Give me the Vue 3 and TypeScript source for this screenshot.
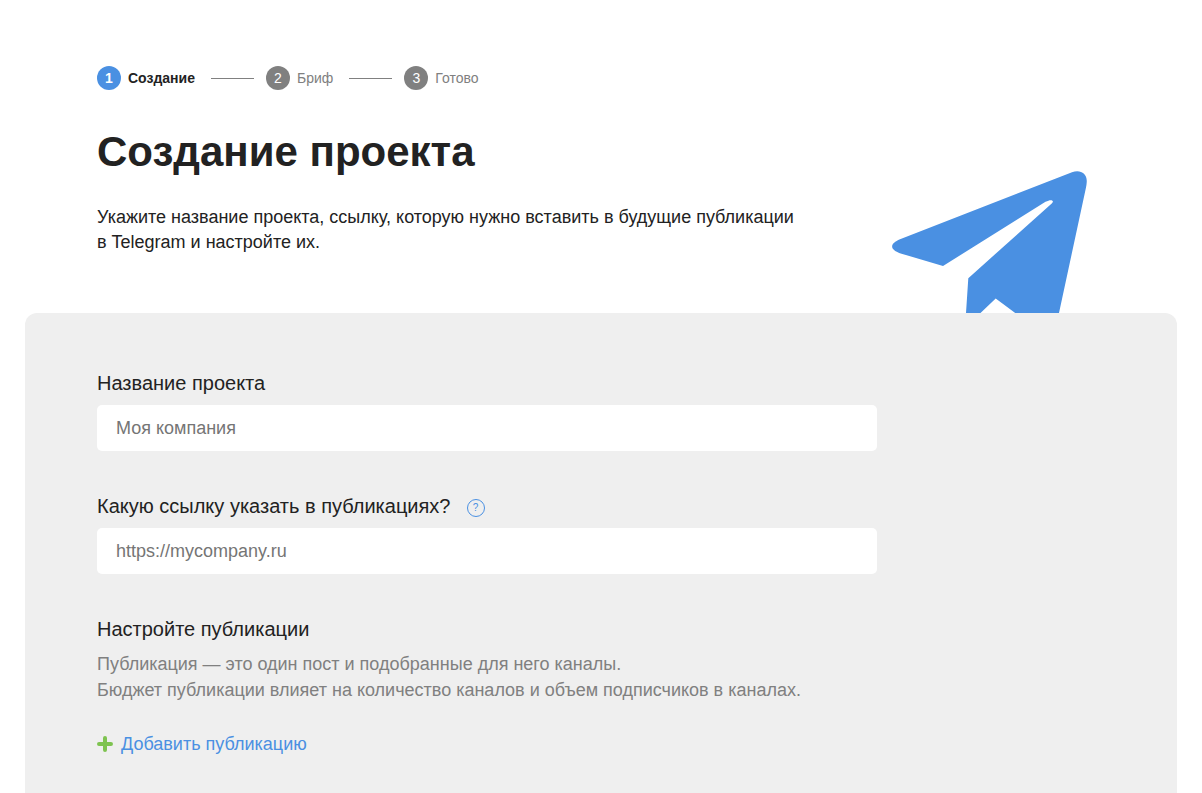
<script setup lang="ts">
import { ref } from 'vue'

interface Step {
  number: number
  title: string
}

const steps: Step[] = [
  { number: 1, title: 'Создание' },
  { number: 2, title: 'Бриф' },
  { number: 3, title: 'Готово' },
]
const currentStep = ref(1)
const projectName = ref('')
const projectLink = ref('')
</script>

<template>
  <main class="page">
    <header class="hero">
      <div class="intro">
        <ol class="steps">
          <li
            v-for="step in steps"
            :key="step.number"
            class="step"
            :class="{ active: step.number === currentStep }"
          >
            <span class="step-number">{{ step.number }}</span>
            <span class="step-title">{{ step.title }}</span>
          </li>
        </ol>
        <h1 class="title">Создание проекта</h1>
        <p class="lead">
          Укажите название проекта, ссылку, которую нужно вставить в будущие публикации<br />
          в Telegram и настройте их.
        </p>
      </div>
      <svg class="plane" viewBox="0 0 195 143" aria-hidden="true">
        <path
          fill="#4a90e2"
          d="M8 69.300L180 2.200C188 -.8 195.600 3 194.700 12.500Q194.600 14.500 194 17.500L167 143H123.200L103.700 128.600L88.500 143H74L76.300 108.200L160 33.200C162.500 30.700 159.500 28.500 153.500 31.800L51 96L9.500 83.700C-3.500 79.500 -2 73.500 8 69.300Z"
        />
      </svg>
    </header>

    <form class="panel" @submit.prevent>
      <div class="field">
        <label class="label" for="project-name">Название проекта</label>
        <input id="project-name" v-model="projectName" class="input" type="text" placeholder="Моя компания" />
      </div>

      <div class="field">
        <div class="label-row">
          <label class="label" for="project-link">Какую ссылку указать в публикациях?</label>
          <button class="help" type="button" aria-label="Подсказка">?</button>
        </div>
        <input id="project-link" v-model="projectLink" class="input" type="url" placeholder="https://mycompany.ru" />
      </div>

      <section>
        <h2 class="label">Настройте публикации</h2>
        <p class="note">
          Публикация — это один пост и подобранные для него каналы.<br />
          Бюджет публикации влияет на количество каналов и объем подписчиков в каналах.
        </p>
        <button class="add" type="button">
          <svg class="plus" viewBox="0 0 16 16" aria-hidden="true">
            <path d="M8 2V14M2 8H14" fill="none" stroke="#7ec350" stroke-width="4" stroke-linecap="round" />
          </svg>
          Добавить публикацию
        </button>
      </section>
    </form>
  </main>
</template>

<style>
body {
  margin: 0;
  background: #fff;
}
</style>

<style scoped>
.page {
  box-sizing: border-box;
  display: flex;
  flex-direction: column;
  min-height: 100vh;
  padding: 0 25px;
  color: #222;
  font-family: "Liberation Sans", Arial, sans-serif;
  font-size: 18px;
  line-height: 26px;
}

.hero {
  display: flex;
  align-items: flex-end;
  justify-content: space-between;
  padding: 66px 90px 0 72px;
}

.intro {
  padding-bottom: 58px;
}

.steps {
  display: flex;
  margin: 0;
  padding: 0;
  list-style: none;
}

.step {
  display: flex;
  align-items: center;
  color: #808080;
  font-size: 14px;
  line-height: 24px;
}

.step + .step::before {
  content: "";
  width: 43px;
  height: 1px;
  margin: 0 12px 0 16px;
  background: #808080;
}

.step-number {
  width: 24px;
  height: 24px;
  margin-right: 7px;
  border-radius: 50%;
  background: #808080;
  color: #fff;
  text-align: center;
}

.active {
  color: #222;
  font-weight: 700;
}

.active .step-number {
  background: #4a90e2;
}

.title {
  margin: 37px 0 28px;
  font-size: 42px;
  line-height: 50px;
}

.lead {
  margin: 0;
  line-height: 25px;
  white-space: nowrap;
}

.plane {
  flex: none;
  width: 195px;
  height: 143px;
}

.panel {
  flex: 1;
  padding: 56px 72px 36px;
  border-radius: 12px 12px 0 0;
  background: #efefef;
}

.field {
  max-width: 780px;
  margin-bottom: 41px;
}

.label {
  display: block;
  margin: 0;
  font-size: 20px;
  font-weight: 400;
  line-height: 28px;
}

.label-row {
  display: flex;
  align-items: center;
  gap: 16px;
}

.help {
  box-sizing: border-box;
  width: 18px;
  height: 18px;
  margin-top: 3px;
  padding: 0;
  border: 1px solid #4a90e2;
  border-radius: 50%;
  background: none;
  color: #4a90e2;
  font: 10px/16px "Liberation Sans", Arial, sans-serif;
  cursor: pointer;
}

.input {
  box-sizing: border-box;
  display: block;
  width: 100%;
  height: 46px;
  margin-top: 8px;
  padding: 0 19px;
  border: 0;
  border-radius: 5px;
  background: #fff;
  color: #222;
  font: inherit;
}

.input::placeholder {
  color: #757575;
  opacity: 1;
}

.note {
  margin: 8px 0 28px;
  color: #808080;
}

.add {
  display: flex;
  align-items: center;
  gap: 8px;
  padding: 0;
  border: 0;
  background: none;
  color: #4a90e2;
  font: inherit;
  cursor: pointer;
}

.plus {
  width: 16px;
  height: 16px;
}
</style>
